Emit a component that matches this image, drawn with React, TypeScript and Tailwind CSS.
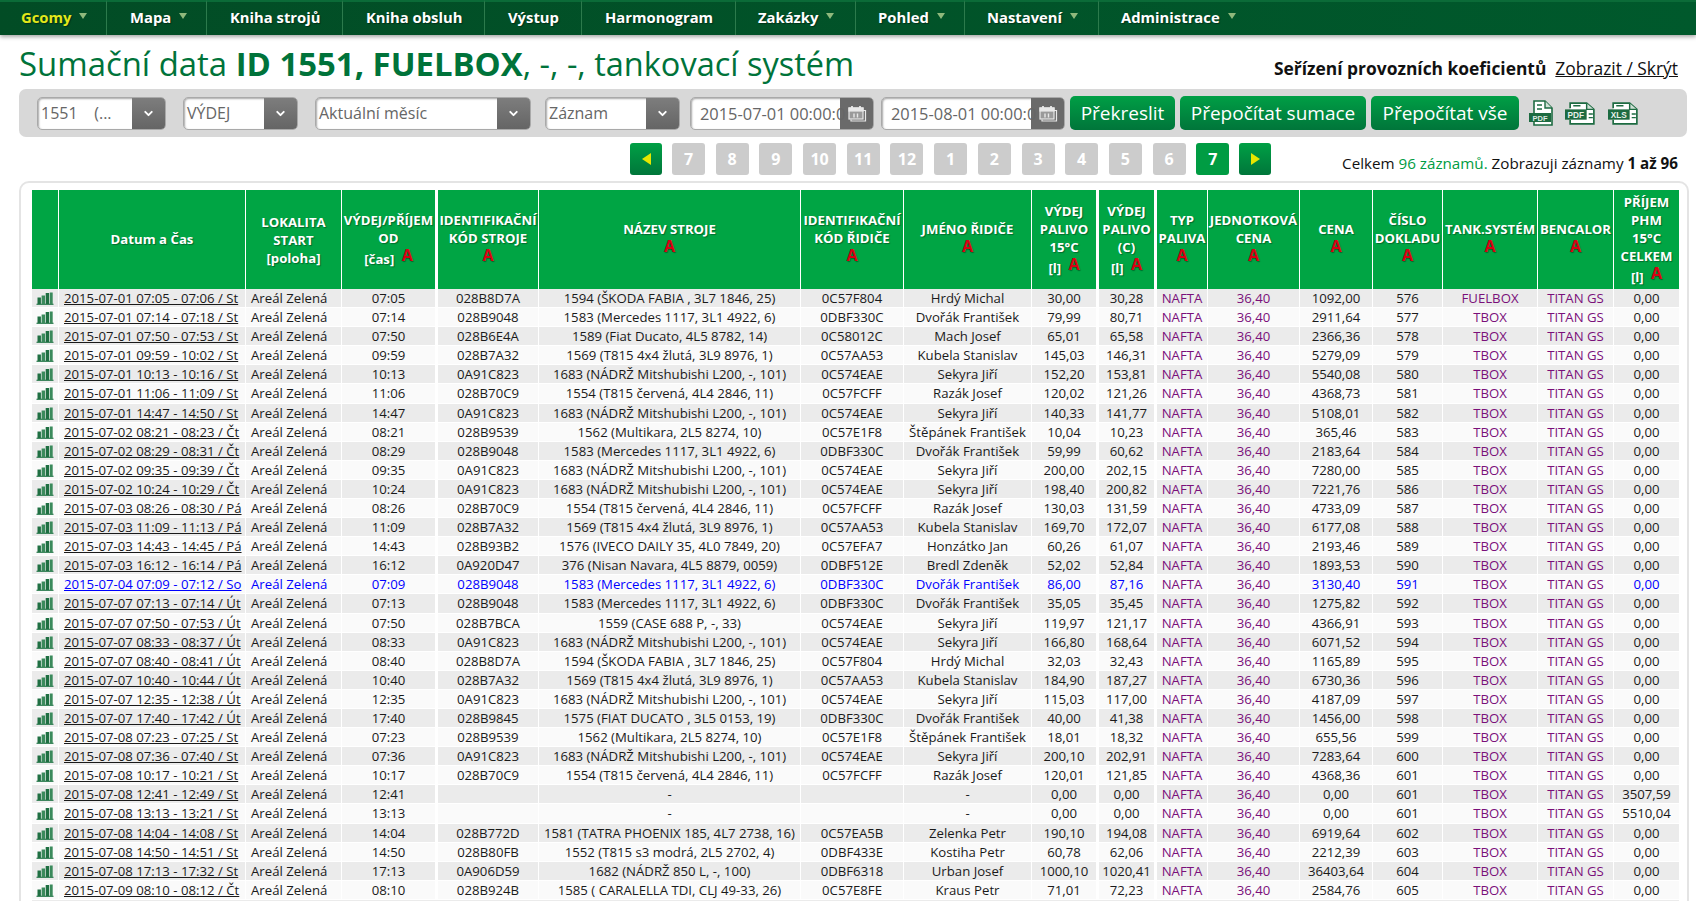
import { ChevronDown } from "lucide-react";

const NAV = [
  { label: "Gcomy", width: "w-[107px]", pad: "pl-[21px]", arrow: true, active: true },
  { label: "Mapa", width: "w-[100px]", pad: "pl-[23px]", arrow: true },
  { label: "Kniha strojů", width: "w-[136px]", pad: "pl-[23px]" },
  { label: "Kniha obsluh", width: "w-[142px]", pad: "pl-[23px]" },
  { label: "Výstup", width: "w-[97px]", pad: "pl-[23px]" },
  { label: "Harmonogram", width: "w-[154px]", pad: "pl-[23px]" },
  { label: "Zakázky", width: "w-[120px]", pad: "pl-[22px]", arrow: true },
  { label: "Pohled", width: "w-[109px]", pad: "pl-[22px]", arrow: true },
  { label: "Nastavení", width: "w-[134px]", pad: "pl-[22px]", arrow: true },
  { label: "Administrace", width: "w-[150px]", pad: "pl-[22px]", arrow: true, last: true },
];

const PAGES = ["7", "8", "9", "10", "11", "12", "1", "2", "3", "4", "5", "6"];

const COLS = [
  "w-[27px]", "w-[187px]", "w-[96px]", "w-[94px]", "w-[103px]", "w-[262px]", "w-[103px]", "w-[128px]", "w-[65px]",
  "w-[58px]", "w-[53px]", "w-[92px]", "w-[73px]", "w-[70px]", "w-[95px]", "w-[76px]", "w-[65px]",
];

// date | time | machine id | machine | driver id | driver | 15C | C | price | doc | tank | income
const RAW = [
  "2015-07-01 07:05 - 07:06 / St|07:05|028B8D7A|1594 (ŠKODA FABIA , 3L7 1846, 25)|0C57F804|Hrdý Michal|30,00|30,28|1092,00|576|FUELBOX|0,00",
  "2015-07-01 07:14 - 07:18 / St|07:14|028B9048|1583 (Mercedes 1117, 3L1 4922, 6)|0DBF330C|Dvořák František|79,99|80,71|2911,64|577|TBOX|0,00",
  "2015-07-01 07:50 - 07:53 / St|07:50|028B6E4A|1589 (Fiat Ducato, 4L5 8782, 14)|0C58012C|Mach Josef|65,01|65,58|2366,36|578|TBOX|0,00",
  "2015-07-01 09:59 - 10:02 / St|09:59|028B7A32|1569 (T815 4x4 žlutá, 3L9 8976, 1)|0C57AA53|Kubela Stanislav|145,03|146,31|5279,09|579|TBOX|0,00",
  "2015-07-01 10:13 - 10:16 / St|10:13|0A91C823|1683 (NÁDRŽ Mitshubishi L200, -, 101)|0C574EAE|Sekyra Jiří|152,20|153,81|5540,08|580|TBOX|0,00",
  "2015-07-01 11:06 - 11:09 / St|11:06|028B70C9|1554 (T815 červená, 4L4 2846, 11)|0C57FCFF|Razák Josef|120,02|121,26|4368,73|581|TBOX|0,00",
  "2015-07-01 14:47 - 14:50 / St|14:47|0A91C823|1683 (NÁDRŽ Mitshubishi L200, -, 101)|0C574EAE|Sekyra Jiří|140,33|141,77|5108,01|582|TBOX|0,00",
  "2015-07-02 08:21 - 08:23 / Čt|08:21|028B9539|1562 (Multikara, 2L5 8274, 10)|0C57E1F8|Štěpánek František|10,04|10,23|365,46|583|TBOX|0,00",
  "2015-07-02 08:29 - 08:31 / Čt|08:29|028B9048|1583 (Mercedes 1117, 3L1 4922, 6)|0DBF330C|Dvořák František|59,99|60,62|2183,64|584|TBOX|0,00",
  "2015-07-02 09:35 - 09:39 / Čt|09:35|0A91C823|1683 (NÁDRŽ Mitshubishi L200, -, 101)|0C574EAE|Sekyra Jiří|200,00|202,15|7280,00|585|TBOX|0,00",
  "2015-07-02 10:24 - 10:29 / Čt|10:24|0A91C823|1683 (NÁDRŽ Mitshubishi L200, -, 101)|0C574EAE|Sekyra Jiří|198,40|200,82|7221,76|586|TBOX|0,00",
  "2015-07-03 08:26 - 08:30 / Pá|08:26|028B70C9|1554 (T815 červená, 4L4 2846, 11)|0C57FCFF|Razák Josef|130,03|131,59|4733,09|587|TBOX|0,00",
  "2015-07-03 11:09 - 11:13 / Pá|11:09|028B7A32|1569 (T815 4x4 žlutá, 3L9 8976, 1)|0C57AA53|Kubela Stanislav|169,70|172,07|6177,08|588|TBOX|0,00",
  "2015-07-03 14:43 - 14:45 / Pá|14:43|028B93B2|1576 (IVECO DAILY 35, 4L0 7849, 20)|0C57EFA7|Honzátko Jan|60,26|61,07|2193,46|589|TBOX|0,00",
  "2015-07-03 16:12 - 16:14 / Pá|16:12|0A920D47|376 (Nisan Navara, 4L5 8879, 0059)|0DBF512E|Bredl Zdeněk|52,02|52,84|1893,53|590|TBOX|0,00",
  "2015-07-04 07:09 - 07:12 / So|07:09|028B9048|1583 (Mercedes 1117, 3L1 4922, 6)|0DBF330C|Dvořák František|86,00|87,16|3130,40|591|TBOX|0,00",
  "2015-07-07 07:13 - 07:14 / Út|07:13|028B9048|1583 (Mercedes 1117, 3L1 4922, 6)|0DBF330C|Dvořák František|35,05|35,45|1275,82|592|TBOX|0,00",
  "2015-07-07 07:50 - 07:53 / Út|07:50|028B7BCA|1559 (CASE 688 P, -, 33)|0C574EAE|Sekyra Jiří|119,97|121,17|4366,91|593|TBOX|0,00",
  "2015-07-07 08:33 - 08:37 / Út|08:33|0A91C823|1683 (NÁDRŽ Mitshubishi L200, -, 101)|0C574EAE|Sekyra Jiří|166,80|168,64|6071,52|594|TBOX|0,00",
  "2015-07-07 08:40 - 08:41 / Út|08:40|028B8D7A|1594 (ŠKODA FABIA , 3L7 1846, 25)|0C57F804|Hrdý Michal|32,03|32,43|1165,89|595|TBOX|0,00",
  "2015-07-07 10:40 - 10:44 / Út|10:40|028B7A32|1569 (T815 4x4 žlutá, 3L9 8976, 1)|0C57AA53|Kubela Stanislav|184,90|187,27|6730,36|596|TBOX|0,00",
  "2015-07-07 12:35 - 12:38 / Út|12:35|0A91C823|1683 (NÁDRŽ Mitshubishi L200, -, 101)|0C574EAE|Sekyra Jiří|115,03|117,00|4187,09|597|TBOX|0,00",
  "2015-07-07 17:40 - 17:42 / Út|17:40|028B9845|1575 (FIAT DUCATO , 3L5 0153, 19)|0DBF330C|Dvořák František|40,00|41,38|1456,00|598|TBOX|0,00",
  "2015-07-08 07:23 - 07:25 / St|07:23|028B9539|1562 (Multikara, 2L5 8274, 10)|0C57E1F8|Štěpánek František|18,01|18,32|655,56|599|TBOX|0,00",
  "2015-07-08 07:36 - 07:40 / St|07:36|0A91C823|1683 (NÁDRŽ Mitshubishi L200, -, 101)|0C574EAE|Sekyra Jiří|200,10|202,91|7283,64|600|TBOX|0,00",
  "2015-07-08 10:17 - 10:21 / St|10:17|028B70C9|1554 (T815 červená, 4L4 2846, 11)|0C57FCFF|Razák Josef|120,01|121,85|4368,36|601|TBOX|0,00",
  "2015-07-08 12:41 - 12:49 / St|12:41||-||-|0,00|0,00|0,00|601|TBOX|3507,59",
  "2015-07-08 13:13 - 13:21 / St|13:13||-||-|0,00|0,00|0,00|601|TBOX|5510,04",
  "2015-07-08 14:04 - 14:08 / St|14:04|028B772D|1581 (TATRA PHOENIX 185, 4L7 2738, 16)|0C57EA5B|Zelenka Petr|190,10|194,08|6919,64|602|TBOX|0,00",
  "2015-07-08 14:50 - 14:51 / St|14:50|028B80FB|1552 (T815 s3 modrá, 2L5 2702, 4)|0DBF433E|Kostiha Petr|60,78|62,06|2212,39|603|TBOX|0,00",
  "2015-07-08 17:13 - 17:32 / St|17:13|0A906D59|1682 (NÁDRŽ 850 L, -, 100)|0DBF6318|Urban Josef|1000,10|1020,41|36403,64|604|TBOX|0,00",
  "2015-07-09 08:10 - 08:12 / Čt|08:10|028B924B|1585 ( CARALELLA TDI, CLJ 49-33, 26)|0C57E8FE|Kraus Petr|71,01|72,23|2584,76|605|TBOX|0,00",
];

function SortA({ className = "" }: { className?: string }) {
  return <span className={`text-[16px] font-bold leading-none text-[#d80012] ${className}`}>A</span>;
}

// unit label sits a few px below the baseline of the A next to it
function Unit({ text }: { text: string }) {
  return (
    <>
      <span className="align-[-3px]">{text}</span> <SortA className="ml-[4px]" />
    </>
  );
}

function Select({ text, width, gap }: { text: string; width: string; gap: string }) {
  return (
    <div className={`flex h-[33px] shrink-0 overflow-hidden rounded-[5px] border border-[#a9a9a9] bg-white shadow-[inset_1px_1px_2px_rgba(0,0,0,0.35)] ${width} ${gap}`}>
      <span className="flex-1 overflow-hidden whitespace-pre pl-[3px] text-[16px] leading-[31px] text-[#666]">{text}</span>
      <span className="flex w-[33px] items-center justify-center bg-linear-to-b from-[#7d7d7d] to-[#656565]">
        <ChevronDown size={13} strokeWidth={3.5} className="text-white" />
      </span>
    </div>
  );
}

function DateBox({ text, gap }: { text: string; gap: string }) {
  return (
    <div className={`relative h-[33px] w-[184px] shrink-0 overflow-hidden rounded-[5px] border border-[#a9a9a9] bg-white shadow-[inset_1px_1px_2px_rgba(0,0,0,0.35)] ${gap}`}>
      <span className="absolute inset-y-0 right-0 flex w-[33px] items-center justify-center bg-[#6a6a6a]">
        <svg width="20" height="17" viewBox="0 0 20 17" fill="none" stroke="#e8e8e8" strokeWidth="1.2">
          <rect x="2" y="3" width="14" height="11" fill="#9a9a9a" />
          <path d="M4 14.5v1.5h14.5V5.5H16" />
          <path d="M5 1v4M13 1v4" strokeWidth="1.8" />
          <rect x="2" y="3" width="14" height="3" fill="#e8e8e8" />
          <path d="M7 8.5v4M10.5 8.5v4" strokeWidth="1.4" />
        </svg>
      </span>
      <span className="relative block whitespace-nowrap pl-[9px] text-[16.4px] leading-[31px] text-[#666]">{text}</span>
    </div>
  );
}

function GreenButton({ label, width, gap }: { label: string; width: string; gap: string }) {
  return (
    <button className={`h-[34px] shrink-0 rounded-[5px] bg-linear-to-b from-[#009f45] to-[#00753a] text-[19px] leading-[34px] text-white ${width} ${gap}`}>
      {label}
    </button>
  );
}

function BarsIcon() {
  return (
    <svg width="18" height="13" viewBox="0 0 18 13" className="mx-auto block">
      <path d="M0.5 12.3h17" stroke="#2a7a4d" strokeWidth="1.2" />
      <rect x="1.5" y="5.5" width="3.4" height="6.5" fill="#1f6f42" />
      <rect x="5.6" y="3.5" width="3.4" height="8.5" fill="#3b8a5c" />
      <rect x="9.7" y="1" width="3.4" height="11" fill="#1f6f42" />
      <rect x="13.8" y="0.5" width="2.9" height="11.5" fill="#3b8a5c" />
    </svg>
  );
}

function FileIcon({ label, wide }: { label: string; wide?: boolean }) {
  if (!wide) {
    return (
      <svg width="26" height="26" viewBox="0 0 26 26" className="shrink-0">
        <path d="M5 14V1h11l7 7v17H5v-3" fill="#fff" stroke="#1d6b41" strokeWidth="1.6" />
        <path d="M16 1v7h7" fill="#cfe0d6" stroke="#1d6b41" strokeWidth="1.4" />
        <path d="M8 5h5M8 9h5" stroke="#1d6b41" strokeWidth="1.6" />
        <rect x="0" y="13" width="22" height="9" fill="#1d6b41" />
        <text x="11" y="20.5" textAnchor="middle" fontSize="7.5" fontWeight="700" fill="#dfe9e3" fontFamily="'Liberation Sans',sans-serif">
          {label}
        </text>
      </svg>
    );
  }
  return (
    <svg width="33" height="23" viewBox="0 0 32 22" className="shrink-0">
      <path d="M5 6V1h16l7 6v14H5v-4" fill="#fff" stroke="#1d6b41" strokeWidth="1.6" />
      <path d="M21 1v6h7" fill="#cfe0d6" stroke="#1d6b41" strokeWidth="1.4" />
      <path d="M8 3.5h7M23 11.5h4M23 15h4" stroke="#1d6b41" strokeWidth="1.4" />
      <rect x="0" y="7" width="21" height="10" fill="#1d6b41" />
      <text x="10.5" y="15" textAnchor="middle" fontSize="8" fontWeight="700" fill="#e8f0eb" fontFamily="'Liberation Sans',sans-serif">
        {label}
      </text>
    </svg>
  );
}

const thBase = "bg-[#00a544] p-0 text-center align-middle text-[13.2px] font-bold leading-[18px] text-white [text-shadow:1px_1px_1px_rgba(0,0,0,0.35)]";
const th = `border-r border-white ${thBase}`;
// cells whose last line is only the A carry some spare room under it
const thA = `${th} pb-[4px]`;

function HeaderRow() {
  return (
    <tr className="h-[99px]">
      <th className={th}></th>
      <th className={`${th} pb-[2px]`}>Datum a Čas</th>
      <th className={th}>LOKALITA<br />START<br />[poloha]</th>
      <th className={`${th} whitespace-nowrap`}>VÝDEJ/PŘÍJEM<br />OD<br /><Unit text="[čas]" /></th>
      <th className={`${thA} border-l-2 border-l-white whitespace-nowrap`}>IDENTIFIKAČNÍ<br />KÓD STROJE<br /><SortA /></th>
      <th className={thA}>NÁZEV STROJE<br /><SortA /></th>
      <th className={`${thA} whitespace-nowrap`}>IDENTIFIKAČNÍ<br />KÓD ŘIDIČE<br /><SortA /></th>
      <th className={thA}>JMÉNO ŘIDIČE<br /><SortA /></th>
      <th className={th}>VÝDEJ<br />PALIVO<br />15°C<br /><Unit text="[l]" /></th>
      <th className={`${th} border-l-2 border-l-white`}>VÝDEJ<br />PALIVO<br />(C)<br /><Unit text="[l]" /></th>
      <th className={`${thA} border-l-2 border-l-white`}>TYP<br />PALIVA<br /><SortA /></th>
      <th className={`${thA} whitespace-nowrap`}>JEDNOTKOVÁ<br />CENA<br /><SortA /></th>
      <th className={thA}>CENA<br /><SortA /></th>
      <th className={thA}>ČÍSLO<br />DOKLADU<br /><SortA /></th>
      <th className={thA}>TANK.SYSTÉM<br /><SortA /></th>
      <th className={thA}>BENCALOR<br /><SortA /></th>
      <th className={thBase}>PŘÍJEM<br />PHM<br />15°C<br />CELKEM<br /><Unit text="[l]" /></th>
    </tr>
  );
}

function DataRow({ raw, index }: { raw: string; index: number }) {
  const [date, time, machineId, machine, driverId, driver, v15, vc, price, doc, tank, income] = raw.split("|");
  const bg = index % 2 === 0 ? "bg-[#ebebeb]" : "bg-[#fafafa]";
  const text = index === 15 ? "text-[#0000ff]" : "text-[#1a1a1a]";
  // every eleventh row comes out one pixel taller in the reference
  const height = index % 11 === 5 ? "h-[20px] pb-px" : "h-[19px] p-0";
  const td = `border-r border-b border-white text-center ${bg} ${height}`;
  const wide = `border-l-2 border-l-white`;
  const purple = "text-[#7a0f7a]";
  return (
    <tr className={text}>
      <td className={td}><BarsIcon /></td>
      <td className={`${td} !text-left !pl-[5px] whitespace-nowrap`}>
        <a href="#" className="underline">{date}</a>
      </td>
      <td className={`${td} !text-left !pl-[5px] whitespace-nowrap`}>Areál Zelená</td>
      <td className={td}>{time}</td>
      <td className={`${td} ${wide}`}>{machineId}</td>
      <td className={`${td} whitespace-nowrap`}>{machine}</td>
      <td className={td}>{driverId}</td>
      <td className={`${td} whitespace-nowrap`}>{driver}</td>
      <td className={td}>{v15}</td>
      <td className={`${td} ${wide}`}>{vc}</td>
      <td className={`${td} ${wide} ${purple}`}>NAFTA</td>
      <td className={`${td} ${purple}`}>36,40</td>
      <td className={td}>{price}</td>
      <td className={td}>{doc}</td>
      <td className={`${td} ${purple}`}>{tank}</td>
      <td className={`${td} ${purple}`}>TITAN GS</td>
      <td className={`border-b border-white text-center ${bg} ${height}`}>{income}</td>
    </tr>
  );
}

export default function App() {
  return (
    <div className="h-[901px] overflow-hidden bg-white text-[#111] [font-family:'Open_Sans',sans-serif]">
      <nav className="relative z-10 flex h-[35px] bg-linear-to-r from-[#024c25] to-[#00592c] shadow-[0_2px_4px_rgba(0,0,0,0.35)]">
        {NAV.map((item) => (
          <a
            key={item.label}
            href="#"
            className={`flex items-center gap-[8px] border-t-2 border-t-[#0b6b38] pb-[2px] text-[14.8px] font-bold text-white [text-shadow:1px_1px_1px_rgba(0,0,0,0.4)] ${item.width} ${item.pad} ${item.last ? "" : "border-r border-r-[#2c7a4c]"}`}
          >
            <span className={item.active ? "text-[#e3e81a]" : ""}>{item.label}</span>
            {item.arrow && <span className="mt-[-3px] h-0 w-0 border-x-4 border-t-[6px] border-x-transparent border-t-[#8fb87c]" />}
          </a>
        ))}
        <div className="flex-1 border-t-2 border-t-[#0b6b38]" />
      </nav>

      <div className="flex h-[54px] items-center justify-between pl-[19px] pr-[18px]">
        <h1 className="pt-[4px] text-[32.9px] font-normal text-[#00733a]">
          Sumační data <b>ID 1551, FUELBOX</b>
          <span className="text-[32.5px]">, -, -, tankovací systém</span>
        </h1>
        <div className="mt-[12px] text-[17.4px]">
          <b className="mr-[9px]">Seřízení provozních koeficientů</b>
          <a href="#" className="underline">Zobrazit / Skrýt</a>
        </div>
      </div>

      <div className="mx-[19px] flex h-[48px] w-[1668px] items-center rounded-[7px] bg-[#d8d8d8] pl-[18px]">
        <Select text="1551    (..." width="w-[129px]" gap="" />
        <Select text="VÝDEJ" width="w-[115px]" gap="ml-[17px]" />
        <Select text="Aktuální měsíc" width="w-[216px]" gap="ml-[17px]" />
        <Select text="Záznam" width="w-[135px]" gap="ml-[14px]" />
        <DateBox text="2015-07-01 00:00:0" gap="ml-[10px]" />
        <DateBox text="2015-08-01 00:00:0" gap="ml-[7px]" />
        <GreenButton label="Překreslit" width="w-[105px]" gap="ml-[5px]" />
        <GreenButton label="Přepočítat sumace" width="w-[186px]" gap="ml-[5px]" />
        <GreenButton label="Přepočítat vše" width="w-[148px]" gap="ml-[5px]" />
        <div className="ml-[10px] flex items-center gap-[10px]">
          <FileIcon label="PDF" />
          <FileIcon label="PDF" wide />
          <FileIcon label="XLS" wide />
        </div>
      </div>

      <div className="mt-[6px] flex h-[32px] items-center pl-[630px] pr-[18px]">
        <button className="flex h-[32px] w-[32px] items-center justify-center rounded-[3px] bg-linear-to-b from-[#00a045] to-[#00763a]">
          <span className="h-0 w-0 border-y-[6px] border-r-[9px] border-y-transparent border-r-[#e6e600]" />
        </button>
        <div className="ml-[10px] flex gap-[10.7px]">
          {PAGES.map((page, i) => (
            <span key={i} className="flex h-[32px] w-[33px] items-center justify-center rounded-[3px] bg-[#cccccc] text-[16px] font-bold text-white">
              {page}
            </span>
          ))}
          <span className="flex h-[32px] w-[33px] items-center justify-center rounded-[3px] bg-[#009c43] text-[16px] font-bold text-white">7</span>
        </div>
        <button className="ml-[10px] flex h-[32px] w-[32px] items-center justify-center rounded-[3px] bg-linear-to-b from-[#00a045] to-[#00763a]">
          <span className="h-0 w-0 border-y-[6px] border-l-[9px] border-y-transparent border-l-[#e6e600]" />
        </button>
        <div className="ml-auto mt-[8px] text-[15.2px]">
          Celkem <span className="text-[#009c43]">96 záznamů.</span> Zobrazuji záznamy <b>1 až 96</b>
        </div>
      </div>

      <div className="ml-[19px] mt-[6px] w-[1670px] rounded-[10px] border-2 border-[#e4e4e4] pl-[11px] pt-[7px]">
        <table className="w-[1646px] table-fixed border-separate border-spacing-0 text-[13.2px] leading-[18px]">
          <colgroup>
            {COLS.map((width, i) => (
              <col key={i} className={width} />
            ))}
          </colgroup>
          <thead>
            <HeaderRow />
          </thead>
          <tbody>
            {RAW.map((raw, i) => (
              <DataRow key={i} raw={raw} index={i} />
            ))}
            <tr>
              <td colSpan={17} className="h-[19px] bg-[#ebebeb]" />
            </tr>
          </tbody>
        </table>
      </div>
    </div>
  );
}
